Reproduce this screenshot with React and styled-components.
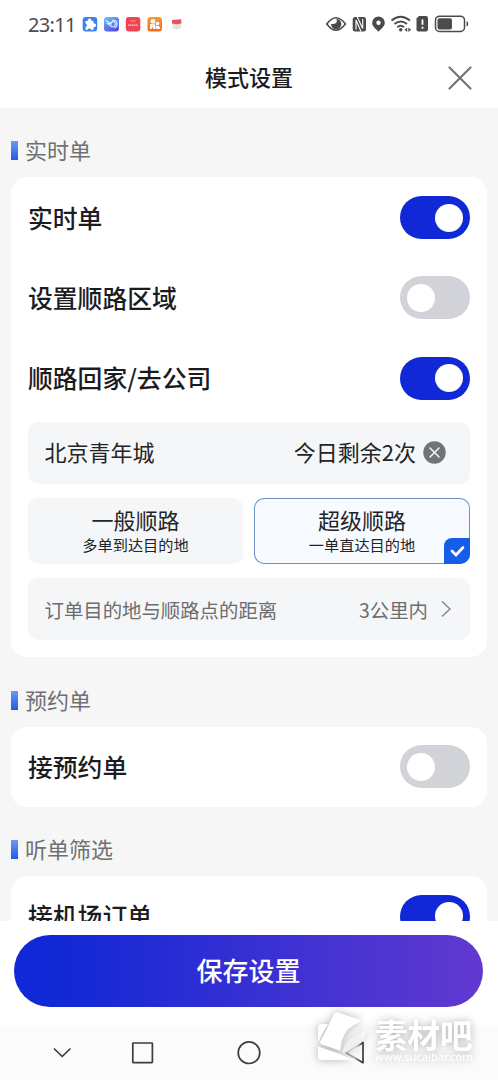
import React, { useState } from 'react';
import styled, { createGlobalStyle } from 'styled-components';

const GlobalStyle = createGlobalStyle`
  * {
    box-sizing: border-box;
  }
  body {
    margin: 0;
    font-family: "Noto Sans CJK SC", sans-serif;
    color: #1c1c1e;
    overflow: hidden;
  }
  button {
    border: 0;
    padding: 0;
    background: none;
    font: inherit;
    color: inherit;
  }
  svg {
    display: block;
    flex: none;
  }
`;

const Screen = styled.div`
  display: flex;
  flex-direction: column;
  width: 498px;
  height: 1080px;
  background: #fff;
  overflow: hidden;
`;

const StatusBar = styled.div`
  display: flex;
  align-items: center;
  justify-content: space-between;
  height: 48px;
  padding: 0 29.500px 0 28px;
`;

const Clock = styled.span`
  width: 54px;
  padding-top: 1px;
  font-family: "Noto Sans", sans-serif;
  font-size: 20px;
  line-height: 47px;
  letter-spacing: -0.7px;
  color: #4b4b4d;
`;

const Group = styled.div`
  display: flex;
  align-items: center;
`;

const Header = styled.header`
  display: grid;
  grid-template-columns: 60px 1fr 60px;
  align-items: center;
  height: 60.3px;
`;

const Title = styled.h1`
  grid-column: 2;
  margin: 0;
  padding-bottom: 4px;
  text-align: center;
  font-size: 22px;
  font-weight: 500;
  line-height: 30px;
`;

const CloseButton = styled.button`
  padding-left: 9px;
`;

const Content = styled.main`
  height: 812.7px;
  padding: 0 11px;
  background: #f6f6f6;
  overflow: hidden;
`;

const SectionTitle = styled.h2`
  display: flex;
  align-items: center;
  gap: 7px;
  height: 69.2px;
  margin: 0;
  padding-top: 16px;
  font-size: 22px;
  font-weight: 400;
  color: #707072;

  &::before {
    content: '';
    width: 7px;
    height: 19px;
    background: linear-gradient(#6f98f3, #1f5ce0);
  }
`;

const Text = styled.span`
  padding-bottom: ${({ $lift = 3 }) => $lift}px;
`;

const Card = styled.section`
  padding: 0 17px ${({ $bottom }) => $bottom || 0}px;
  border-radius: 16px;
  background: #fff;
`;

const Row = styled.div`
  display: flex;
  align-items: center;
  justify-content: space-between;
  height: 80.3px;
`;

const RowLabel = styled.span`
  padding-bottom: 2px;
  font-size: 24.8px;
  font-weight: 500;
  line-height: 36px;
`;

const Toggle = styled.button`
  display: flex;
  align-items: center;
  justify-content: ${({ $on }) => ($on ? 'flex-end' : 'flex-start')};
  width: 70px;
  height: 43px;
  padding: 0 7px;
  border-radius: 22px;
  background: ${({ $on }) => ($on ? '#1028d6' : '#d2d3d9')};

  &::after {
    content: '';
    width: 28px;
    height: 28px;
    border-radius: 50%;
    background: #fff;
  }
`;

const Route = styled.div`
  display: flex;
  flex-direction: column;
  gap: 14.3px;
  padding-top: 3.5px;
`;

const Panel = styled.div`
  display: flex;
  align-items: center;
  justify-content: space-between;
  height: 62px;
  padding: 0 ${({ $muted }) => ($muted ? 19 : 24)}px 0 16.5px;
  border-radius: 10px;
  background: #f5f6f8;
  font-size: ${({ $muted }) => ($muted ? 19.4 : 22)}px;
  color: ${({ $muted }) => ($muted ? '#6c6d70' : '#232427')};
`;

const PanelValue = styled.span`
  display: flex;
  align-items: center;
  gap: ${({ $gap }) => $gap}px;
`;

const Options = styled.div`
  display: grid;
  grid-template-columns: 215px 216px;
  justify-content: space-between;
`;

const Option = styled.button`
  position: relative;
  display: flex;
  flex-direction: column;
  align-items: center;
  height: 66px;
  padding-top: 7px;
  border-radius: 10px;
  overflow: hidden;
  background: ${({ $active }) => ($active ? '#f7fbff' : '#f5f6f8')};
  box-shadow: ${({ $active }) => ($active ? 'inset 0 0 0 1px #6d8fc4' : 'none')};
  color: #232427;
`;

const OptionName = styled.span`
  font-size: 22px;
  line-height: 28px;
`;

const OptionHint = styled.span`
  font-size: 15.2px;
  line-height: 23px;
`;

const Tick = styled.span`
  position: absolute;
  right: 0;
  bottom: 0;
  display: flex;
  align-items: center;
  justify-content: center;
  width: 26px;
  height: 26px;
  border-top-left-radius: 8px;
  background: #155ee8;
`;

const Footer = styled.footer`
  height: 104px;
  padding: 14px 15px 0 14px;
`;

const SaveButton = styled.button`
  width: 100%;
  height: 72px;
  padding-bottom: 2px;
  border-radius: 36px;
  background: linear-gradient(90deg, #1028d6 8%, #6239d0);
  color: #fff;
  font-size: 26px;
  font-weight: 500;
`;

const NavBar = styled.nav`
  position: relative;
  display: flex;
  align-items: center;
  flex: 1;
  padding: 1px 0 0 52px;
  background: #fbfbfb;
`;

const Watermark = styled.div`
  position: absolute;
  left: 316px;
  top: -14px;
  display: flex;
  align-items: flex-start;
  filter: drop-shadow(0 0 4px rgba(0, 0, 0, 0.3));
  color: #fff;
`;

const WatermarkText = styled.div`
  display: flex;
  flex-direction: column;
  margin: 6px 0 0 6px;
`;

const WatermarkName = styled.span`
  font-size: 32.5px;
  font-weight: 700;
  line-height: 34px;
`;

const WatermarkUrl = styled.span`
  font-family: "Noto Sans", sans-serif;
  font-size: 11px;
  font-weight: 500;
  line-height: 11px;
`;

const AppBadges = () => (
  <svg width="104" height="20" viewBox="82 14 104 20">
    <defs>
      <linearGradient id="sky" x1="0" y1="0" x2="0.6" y2="1">
        <stop offset="0" stopColor="#65c9f4" />
        <stop offset="1" stopColor="#534fec" />
      </linearGradient>
      <linearGradient id="orange" x1="0" y1="0" x2="0" y2="1">
        <stop stopColor="#f79b35" />
        <stop offset="1" stopColor="#f26a18" />
      </linearGradient>
    </defs>
    <rect x="82.7" y="17" width="14.5" height="14.5" rx="3" fill="#3d82e8" />
    <path d="M85.5 21h2.3a1.9 1.9 0 1 1 3.6 0h2.2v2.5a1.9 1.9 0 1 1 0 3.6v2.6h-2.7a1.7 1.7 0 0 0-3.2 0h-2.2v-2.6a1.8 1.8 0 0 0 0-3.5z" fill="#fff" />
    <rect x="104" y="17" width="15" height="14.5" rx="3" fill="url(#sky)" />
    <path d="M105.5 20.5l5.5 3h-3.5l4 3c3.5 1.5 5.500-4 2-4.800-2.400-.3-3 1.800-1.800 3M112 20.300c6-.8 6.500 5.700 2.500 7.500" fill="none" stroke="#e4f3ff" strokeWidth="1.1" />
    <rect x="125.8" y="17" width="14.5" height="14.5" rx="3" fill="#f04550" />
    <path d="M130.5 20.5q2.5 1.8 5 0" fill="none" stroke="#ffc0c0" strokeWidth=".7" />
    <path d="M128 25.2h10" stroke="#ffc9c9" strokeWidth="1.3" strokeDasharray="1.5 .5" />
    <rect x="147.5" y="17" width="14.5" height="14.5" rx="3" fill="url(#orange)" />
    <circle cx="153" cy="21.3" r="2.3" fill="#fff" />
    <circle cx="157.5" cy="23.5" r="1.8" fill="#fff" />
    <path d="M150 24l4.5-.5 1.5 5.5h-2.5l-1-2-1 2H150zM155.5 25.5l3.5.5 1.500 3h-4z" fill="#fff" />
    <path d="M172 22h9.5l-.8 6.5-4 1-4-1z" fill="#e6e1e2" />
    <path d="M172 20l9-.7.5 4q-5 2-9.5 0z" fill="#e4525c" />
  </svg>
);

const StatusIcons = () => (
  <svg width="144" height="24" viewBox="325 12 144 24" fill="none" stroke="#4b4b4d">
    <path d="M326.8 24q9.2-12.500 18.6 0-9.400 12.500-18.600 0z" strokeWidth="1.6" />
    <path d="M331 24a5.2 5.2 0 0 0 10.4 0 5.2 5.2 0 0 0-5-5.2q1.300 3.700-1.200 4.700-2.200.8-4.200.5z" fill="#4b4b4d" stroke="none" />
    <rect x="352.7" y="17" width="13.3" height="14.5" rx="2.5" fill="#4b4b4d" stroke="none" />
    <path d="M356 20v9.5M362.7 19v9.5M357.3 17l5.4 11.500M356 20l5 11.500" stroke="#fff" strokeWidth="1.1" />
    <path d="M378.5 16.5a6.3 6.3 0 0 0-6.3 6.3c0 4 4 6 6.3 9 2.3-3 6.3-5 6.3-9a6.3 6.3 0 0 0-6.3-6.3zm0 4a2.2 2.2 0 1 1 0 4.4 2.2 2.2 0 0 1 0-4.4z" fill="#4b4b4d" stroke="none" fillRule="evenodd" />
    <path d="M391.5 20.5q9-7.5 18.5 0M394.5 24q6.3-5 12.5 0M397.3 27.2q3.5-2.7 6.7 0" strokeWidth="1.9" />
    <circle cx="400.7" cy="29.7" r="1.8" fill="#4b4b4d" stroke="none" />
    <path d="M404.5 29.7l2.7-2.2v4.4zM411 29.7l-2.700-2.200v4.400z" fill="#4b4b4d" stroke="none" />
    <path d="M419 16h7q2 0 2 2v11.5q0 2-2 2h-7.5q-2 0-2-2v-11z" fill="#4b4b4d" stroke="none" />
    <path d="M422.5 19.5v5.3M422.5 26.8v1.9" stroke="#fff" strokeWidth="1.8" />
    <rect x="435.5" y="16.2" width="29" height="15.3" rx="4" strokeWidth="1.5" />
    <rect x="437.5" y="18.2" width="14.5" height="11.3" rx="2" fill="#4b4b4d" stroke="none" />
    <path d="M467.3 21.7v4.3" strokeWidth="1.5" />
  </svg>
);

const CloseIcon = () => (
  <svg width="26" height="26" viewBox="0 0 26 26">
    <path d="M2.5 2.5l21 21M23.5 2.5l-21 21" stroke="#747475" strokeWidth="2.2" strokeLinecap="round" />
  </svg>
);

const ClearIcon = () => (
  <svg width="23" height="23" viewBox="0 0 23 23">
    <circle cx="11.5" cy="11.5" r="11.2" fill="#727376" />
    <path d="M7 7l9 9M16 7l-9 9" stroke="#f5f6f8" strokeWidth="1.5" strokeLinecap="round" />
  </svg>
);

const ChevronIcon = () => (
  <svg width="10" height="18" viewBox="0 0 10 18">
    <path d="M1 1.5l8 7.5-8 7.5" fill="none" stroke="#858689" strokeWidth="1.5" />
  </svg>
);

const TickIcon = () => (
  <svg width="15" height="12" viewBox="0 0 15 12">
    <path d="M2 6l4 4 7-7.5" fill="none" stroke="#fff" strokeWidth="2.7" strokeLinecap="round" />
  </svg>
);

const NavIcons = () => (
  <svg width="316" height="30" viewBox="52 1038 316 30" fill="none" stroke="#3d3d3f" strokeWidth="1.7" strokeLinejoin="round">
    <defs>
      <linearGradient id="back" x1="0" x2="1">
        <stop offset=".5" stopColor="#a5a5a6" />
        <stop offset=".85" stopColor="#3d3d3f" />
      </linearGradient>
    </defs>
    <path d="M54 1048.5l8.2 8 8.2-8" />
    <rect x="132.8" y="1043" width="19.6" height="19.6" rx=".5" />
    <circle cx="249" cy="1052.7" r="10.8" />
    <path d="M363 1042.500v20.300l-17-10z" stroke="url(#back)" />
  </svg>
);

const WatermarkLogo = () => (
  <svg width="53" height="52" viewBox="0 0 53 52" fill="#fff">
    <path d="M18 3q1-2.5 4-1.5L43 8.5q2 1 .5 2.5-14 6-17.5 18l-2 10.5L6 33.5q-2.500-1-1.500-3.500z" />
    <path d="M2 17q0-4 4-4h6L2 31z" />
    <path d="M2 35.5L24 43l13 6H5q-3 0-3-3z" />
    <path d="M51 16q-4 6-11 9-12 5-13.5 17 12-1 18-9 5.500-7 6.500-17z" fillOpacity=".55" />
  </svg>
);

const SettingRow = ({ label, defaultOn }) => {
  const [on, setOn] = useState(Boolean(defaultOn));
  return (
    <Row>
      <RowLabel>{label}</RowLabel>
      <Toggle
        $on={on}
        role="switch"
        aria-checked={on}
        aria-label={label}
        onClick={() => setOn(!on)}
      />
    </Row>
  );
};

const routeOptions = [
  { name: '一般顺路', hint: '多单到达目的地' },
  { name: '超级顺路', hint: '一单直达目的地' },
];

const RouteOptions = () => {
  const [selected, setSelected] = useState(1);
  return (
    <Options>
      {routeOptions.map(({ name, hint }, index) => (
        <Option key={name} $active={selected === index} onClick={() => setSelected(index)}>
          <OptionName>{name}</OptionName>
          <OptionHint>{hint}</OptionHint>
          {selected === index && <Tick><TickIcon /></Tick>}
        </Option>
      ))}
    </Options>
  );
};

const App = () => (
  <Screen>
    <GlobalStyle />
    <StatusBar>
      <Group>
        <Clock>23:11</Clock>
        <AppBadges />
      </Group>
      <StatusIcons />
    </StatusBar>
    <Header>
      <Title>模式设置</Title>
      <CloseButton aria-label="关闭"><CloseIcon /></CloseButton>
    </Header>
    <Content>
      <SectionTitle><Text>实时单</Text></SectionTitle>
      <Card $bottom={17}>
        <SettingRow label="实时单" defaultOn />
        <SettingRow label="设置顺路区域" />
        <SettingRow label="顺路回家/去公司" defaultOn />
        <Route>
          <Panel>
            <Text>北京青年城</Text>
            <PanelValue $gap={7}><Text>今日剩余2次</Text><ClearIcon /></PanelValue>
          </Panel>
          <RouteOptions />
          <Panel $muted>
            <Text $lift={0}>订单目的地与顺路点的距离</Text>
            <PanelValue $gap={13}><Text $lift={0}>3公里内</Text><ChevronIcon /></PanelValue>
          </Panel>
        </Route>
      </Card>
      <SectionTitle><Text>预约单</Text></SectionTitle>
      <Card>
        <SettingRow label="接预约单" />
      </Card>
      <SectionTitle><Text>听单筛选</Text></SectionTitle>
      <Card>
        <SettingRow label="接机场订单" defaultOn />
      </Card>
    </Content>
    <Footer>
      <SaveButton>保存设置</SaveButton>
    </Footer>
    <NavBar>
      <NavIcons />
      <Watermark>
        <WatermarkLogo />
        <WatermarkText>
          <WatermarkName>素材吧</WatermarkName>
          <WatermarkUrl>www.sucaibar.com</WatermarkUrl>
        </WatermarkText>
      </Watermark>
    </NavBar>
  </Screen>
);

export default App;
